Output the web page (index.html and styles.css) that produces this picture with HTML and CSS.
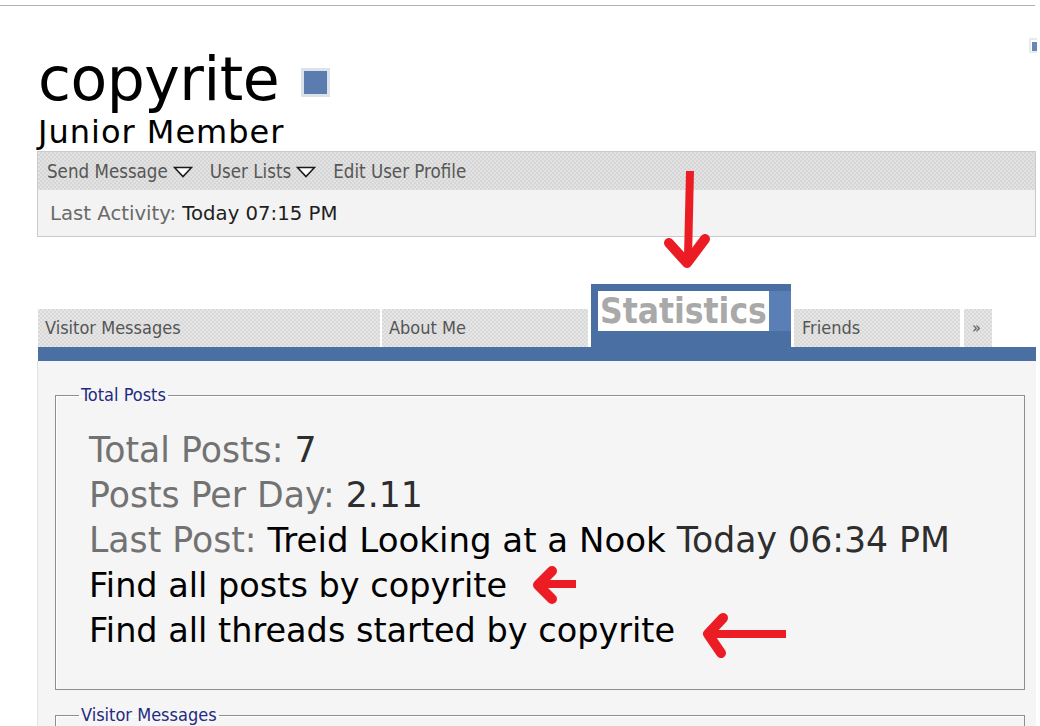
FILE: index.html
```html
<!DOCTYPE html>
<html>
<head>
<meta charset="utf-8">
<title>copyrite - Statistics</title>
<link rel="stylesheet" href="styles.css">
</head>
<body>
<div class="topline"></div>
<header class="head">
  <div class="ident">
    <div class="namerow">
      <h1 class="name">copyrite</h1>
      <span class="status"><span class="status-fill"></span></span>
    </div>
    <div class="rank">Junior Member</div>
  </div>
  <span class="edge-icon"><span class="edge-fill"></span></span>
</header>

<section class="userbox">
  <div class="actions">
    <span class="action">Send Message</span>
    <svg class="tri" width="20" height="12" viewBox="0 0 20 12"><polygon points="1.5,1.5 18.5,1.5 10,10.5" fill="#fff" stroke="#1a1a1a" stroke-width="1.6"/></svg>
    <span class="action">User Lists</span>
    <svg class="tri" width="20" height="12" viewBox="0 0 20 12"><polygon points="1.5,1.5 18.5,1.5 10,10.5" fill="#fff" stroke="#1a1a1a" stroke-width="1.6"/></svg>
    <span class="action">Edit User Profile</span>
  </div>
  <div class="activity"><span class="lbl">Last Activity:</span> <span class="val">Today 07:15 PM</span></div>
</section>

<nav class="tabs">
  <div class="tab tab-vm">Visitor Messages</div>
  <div class="tab tab-about">About Me</div>
  <div class="tab-active">
    <div class="tab-hl"><span class="tab-sel">Statistics</span></div>
  </div>
  <div class="tab tab-friends">Friends</div>
  <div class="tab tab-more">»</div>
</nav>
<div class="tabbar"></div>

<main class="panel">
  <fieldset class="group">
    <legend class="legend">Total Posts</legend>
    <ul class="stats">
      <li><span class="lbl">Total Posts:</span> <span class="num">7</span></li>
      <li><span class="lbl">Posts Per Day:</span> <span class="num">2.11</span></li>
      <li class="lastpost"><span class="lbl">Last Post:</span> <span class="link">Treid Looking at a Nook</span> <span class="num">Today 06:34 PM</span></li>
      <li class="find"><span class="link">Find all posts by copyrite</span></li>
      <li class="find"><span class="link">Find all threads started by copyrite</span></li>
    </ul>
  </fieldset>
  <fieldset class="group group-next">
    <legend class="legend">Visitor Messages</legend>
  </fieldset>
</main>

<svg class="annot" width="1040" height="726" viewBox="0 0 1040 726">
  <g stroke="#ec1c24" fill="none" stroke-linecap="round" stroke-linejoin="round">
    <line x1="690" y1="171" x2="688" y2="258" stroke-width="8" stroke-linecap="butt"/>
    <polyline points="669,243 687,263 705,239" stroke-width="10"/>
    <line x1="542" y1="584" x2="576" y2="584" stroke-width="8" stroke-linecap="butt"/>
    <polyline points="552,571 538,585 552,599" stroke-width="10"/>
    <line x1="712" y1="634" x2="786" y2="634" stroke-width="8" stroke-linecap="butt"/>
    <polyline points="723,618 708,634 721,653" stroke-width="10"/>
  </g>
</svg>
</body>
</html>
```

FILE: styles.css
```css
html, body {
  margin: 0;
  padding: 0;
  background: #fff;
}
body {
  position: relative;
  width: 1040px;
  height: 726px;
  overflow: hidden;
  font-family: "DejaVu Sans", Verdana, sans-serif;
  color: #000;
}

.topline {
  margin-top: 5px;
  width: 1035px;
  height: 1px;
  background: #b3b3b3;
}

.head {
  display: flex;
  justify-content: space-between;
  align-items: flex-start;
  width: 1037px;
}
.ident {
  margin-left: 38px;
  margin-top: 38px;
}
.namerow {
  display: flex;
  align-items: flex-start;
}
.name {
  margin: 0;
  font-weight: normal;
  font-size: 60px;
  line-height: 70px;
  letter-spacing: -0.5px;
  color: #000;
}
.status {
  margin: 24px 0 0 22px;
  width: 29px;
  height: 29px;
  box-sizing: border-box;
  border: 3px solid #dde2ea;
  display: flex;
}
.status-fill {
  flex: 1;
  background: #5b7cae;
}
.rank {
  font-size: 32px;
  line-height: 36px;
  letter-spacing: 1px;
  color: #000;
}
.edge-icon {
  margin-top: 32px;
  width: 8px;
  height: 15px;
  box-sizing: border-box;
  border: 2px solid #e6ebf1;
  border-right: 0;
  display: flex;
}
.edge-fill {
  flex: 1;
  margin: 2px 0 0 1px;
  background: #6a86b3;
}

.userbox {
  margin: 1px 0 0 37px;
  width: 999px;
  box-sizing: border-box;
  border: 1px solid #cacaca;
}
.actions {
  height: 38px;
  display: flex;
  align-items: center;
  padding-left: 9px;
  background: repeating-conic-gradient(#d6d6d6 0 25%, #e2e2e2 0 50%) 0 0 / 4px 4px;
  font-family: "DejaVu Sans Condensed", "DejaVu Sans", sans-serif;
  font-size: 18.6px;
  color: #575757;
}
.tri {
  margin: 1px 17px 0 5px;
}
.activity {
  height: 46px;
  line-height: 47px;
  padding-left: 12px;
  background: #f3f3f3;
  font-size: 19.7px;
}
.activity .lbl { color: #6a6a6a; }
.activity .val { color: #1e1e1e; }

.tabs {
  margin: 47px 0 0 38px;
  height: 63px;
  display: flex;
  align-items: flex-end;
}
.tab {
  height: 38px;
  line-height: 38px;
  box-sizing: border-box;
  padding-left: 7px;
  background: repeating-conic-gradient(#d9d9d9 0 25%, #e5e5e5 0 50%) 0 0 / 4px 4px;
  font-family: "DejaVu Sans Condensed", "DejaVu Sans", sans-serif;
  font-size: 18px;
  color: #555;
}
.tab-vm { width: 342px; }
.tab-about { width: 206px; margin-left: 2px; }
.tab-friends { width: 166px; margin-left: 3px; padding-left: 8px; }
.tab-more { width: 28px; margin-left: 4px; padding-left: 8px; font-size: 16px; }
.tab-active {
  margin-left: 3px;
  width: 200px;
  height: 63px;
  background: #4a6fa2;
  padding-top: 7px;
  padding-left: 7px;
  box-sizing: border-box;
}
.tab-hl {
  height: 40px;
  background: #5a7fb6;
  display: flex;
}
.tab-sel {
  background: #fff;
  padding: 0 2px;
  height: 40px;
  line-height: 40px;
  font-family: "DejaVu Sans Condensed", "DejaVu Sans", sans-serif;
  font-weight: bold;
  font-size: 35px;
  color: #a9a9a9;
}

.tabbar {
  margin-left: 38px;
  width: 998px;
  height: 14px;
  background: #4a6fa2;
}

.panel {
  margin-left: 37px;
  width: 999px;
  box-sizing: border-box;
  border-left: 1px solid #e2e2e2;
  background: #f5f5f5;
  padding: 24px 11px 0 17px;
  height: 365px;
  overflow: hidden;
}
.group {
  margin: 0;
  padding: 23px 0 36px 23px;
  border: 1px solid #8e8e8e;
  box-shadow: inset 1px 1px 0 #fff;
  min-width: 0;
}
.legend {
  padding: 0 2px;
  font-family: "DejaVu Sans Condensed", "DejaVu Sans", sans-serif;
  font-size: 18px;
  line-height: 20px;
  color: #1f2a80;
}
.group-next {
  margin-top: 15px;
  padding-bottom: 0;
  height: 40px;
}
.stats {
  list-style: none;
  margin: 0;
  padding: 0 0 0 10px;
  font-size: 34.7px;
  line-height: 45px;
}
.stats li { height: 45px; white-space: nowrap; }
.stats .lbl { color: #727272; }
.stats .num { color: #2e2e2e; }
.stats .link { color: #000; }
.stats .lastpost .link { font-size: 34px; }
.stats .find { font-size: 33.5px; }

.annot {
  position: absolute;
  left: 0;
  top: 0;
  pointer-events: none;
}
```
